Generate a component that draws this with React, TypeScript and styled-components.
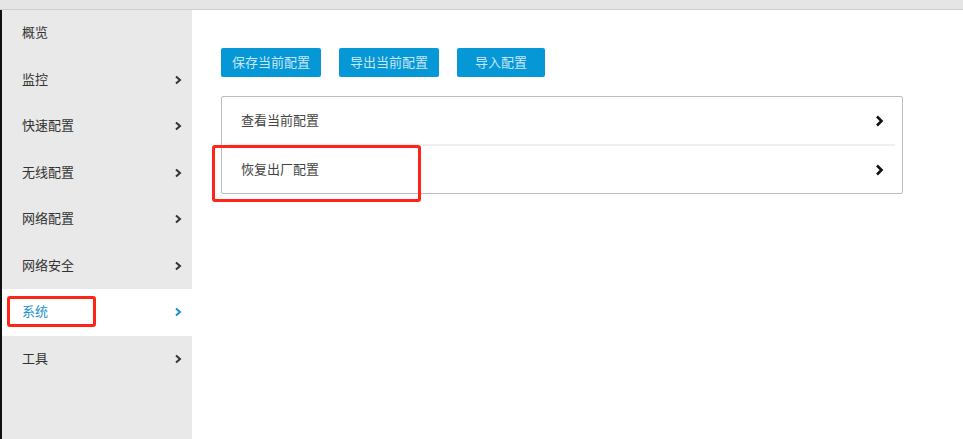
import React from "react";
import styled, { createGlobalStyle } from "styled-components";

const Global = createGlobalStyle`
  html, body { margin: 0; padding: 0; background: #fff; }
  body { font-family: "Noto Sans CJK SC", "Noto Sans", sans-serif; }
`;

const Page = styled.div`
  width: 963px;
  height: 439px;
  display: flex;
  flex-direction: column;
  overflow: hidden;
  position: relative;
`;

const TopBar = styled.div`
  height: 9px;
  background: #e5e5e5;
  border-bottom: 1px solid #cdcdcd;
  flex: none;
`;

const Body = styled.div`
  flex: 1;
  display: flex;
`;

const Edge = styled.div`
  width: 2px;
  background: #111;
  flex: none;
`;

const Sidebar = styled.nav`
  width: 190px;
  background: #e9e9e9;
  display: flex;
  flex-direction: column;
  flex: none;
`;

const NavItem = styled.div<{ $active?: boolean }>`
  height: 46.5px;
  box-sizing: border-box;
  display: flex;
  align-items: center;
  justify-content: space-between;
  padding: 0 10px 3px 20px;
  font-size: 13px;
  color: ${(p) => (p.$active ? "#1a8fd0" : "#333")};
  background: ${(p) => (p.$active ? "#fff" : "transparent")};
  svg { margin-top: 3px; }
`;

const Main = styled.main`
  flex: 1;
  padding: 38px 0 0 29px;
  position: relative;
`;

const ButtonRow = styled.div`
  display: flex;
  gap: 18px;
`;

const Btn = styled.button`
  height: 29px;
  min-width: 88px;
  padding: 0 11px 2px;
  border: none;
  border-radius: 2px;
  background: #0597d6;
  color: rgba(255, 255, 255, 0.78);
  font-family: inherit;
  font-size: 13px;
`;

const Panel = styled.div`
  margin-top: 19px;
  width: 680px;
  border: 1px solid #bdbdbd;
  border-radius: 2px;
  display: flex;
  flex-direction: column;
`;

const Row = styled.div`
  height: 47px;
  box-sizing: border-box;
  display: flex;
  align-items: center;
  justify-content: space-between;
  padding: 0 18px 3px 19px;
  font-size: 13px;
  color: #444;
  svg { margin-top: 3px; }
`;

const Divider = styled.div`
  height: 2px;
  margin: 0 7px;
  background: #efefef;
`;

const Mark = styled.div<{ $x: number; $y: number; $w: number; $h: number }>`
  position: absolute;
  left: ${(p) => p.$x}px;
  top: ${(p) => p.$y}px;
  width: ${(p) => p.$w}px;
  height: ${(p) => p.$h}px;
  box-sizing: border-box;
  border: 3px solid #ff2418;
  border-radius: 3px;
  pointer-events: none;
`;

const NavChevron = ({ color }: { color: string }) => (
  <svg width="8" height="10" viewBox="0 0 8 10">
    <polyline points="2,1.5 6,5 2,8.5" fill="none" stroke={color} strokeWidth="2" />
  </svg>
);

const RowChevron = () => (
  <svg width="9" height="12" viewBox="0 0 9 12">
    <polyline points="2,1.5 6.5,6 2,10.5" fill="none" stroke="#111" strokeWidth="2.6" />
  </svg>
);

const nav = [
  { label: "概览", arrow: false },
  { label: "监控", arrow: true },
  { label: "快速配置", arrow: true },
  { label: "无线配置", arrow: true },
  { label: "网络配置", arrow: true },
  { label: "网络安全", arrow: true },
  { label: "系统", arrow: true, active: true },
  { label: "工具", arrow: true },
];

export default function App() {
  return (
    <Page>
      <Global />
      <TopBar />
      <Body>
        <Edge />
        <Sidebar>
          {nav.map((n) => (
            <NavItem key={n.label} $active={n.active}>
              <span>{n.label}</span>
              {n.arrow && <NavChevron color={n.active ? "#1a8fd0" : "#333"} />}
            </NavItem>
          ))}
        </Sidebar>
        <Main>
          <ButtonRow>
            <Btn>保存当前配置</Btn>
            <Btn>导出当前配置</Btn>
            <Btn>导入配置</Btn>
          </ButtonRow>
          <Panel>
            <Row>
              <span>查看当前配置</span>
              <RowChevron />
            </Row>
            <Divider />
            <Row>
              <span>恢复出厂配置</span>
              <RowChevron />
            </Row>
          </Panel>
        </Main>
      </Body>
      <Mark $x={7} $y={296} $w={89} $h={31} />
      <Mark $x={212} $y={145} $w={209} $h={57} />
    </Page>
  );
}
